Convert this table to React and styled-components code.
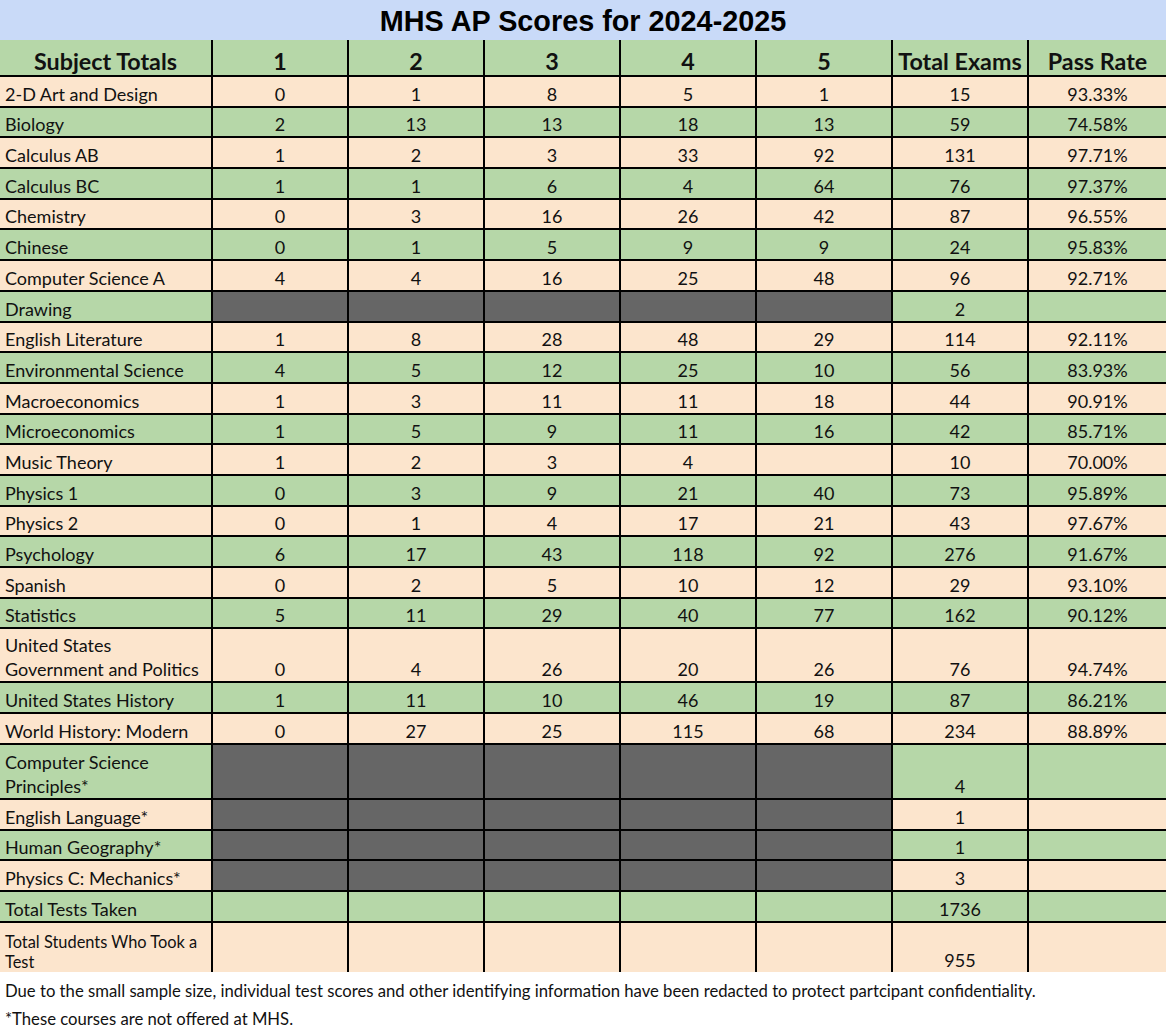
import React from 'react';
import styled, { createGlobalStyle } from 'styled-components';

const GlobalStyle = createGlobalStyle`
  html, body {
    margin: 0;
    padding: 0;
    background: #ffffff;
  }
  body {
    font-family: Lato, 'Noto Sans', sans-serif;
    color: #111111;
  }
`;

const GREEN = '#b6d7a8';
const PEACH = '#fce5cd';
const GRAY = '#666666';

const Sheet = styled.div`
  width: 1166px;
`;

const TitleBar = styled.div`
  height: 40px;
  background: #c9daf8;
  display: flex;
  align-items: center;
  justify-content: center;
  padding-top: 2px;
  box-sizing: border-box;
  font-family: 'Liberation Sans', Arial, sans-serif;
  font-weight: 700;
  font-size: 28.8px;
  color: #000;
`;

const Row = styled.div`
  display: grid;
  grid-template-columns: 213px repeat(6, 136px) 1fr;
  height: ${(p) => p.h}px;
  box-sizing: border-box;
  background: ${(p) => (p.green ? GREEN : PEACH)};
  border-bottom: ${(p) => (p.last ? 'none' : '2px solid #000')};
  font-size: 18px;
  line-height: 24px;
`;

const HeaderRow = styled(Row)`
  font-size: 23.3px;
  line-height: 28px;
  font-weight: 700;
`;

const Cell = styled.div`
  display: flex;
  align-items: flex-end;
  justify-content: ${(p) => (p.left ? 'flex-start' : 'center')};
  padding: ${(p) => (p.left ? '0 0 0 5px' : '0')};
  border-right: ${(p) => (p.end ? 'none' : '2px solid #000')};
  background: ${(p) => (p.redacted ? GRAY : 'transparent')};
  white-space: nowrap;
  overflow: hidden;
`;

const SmallLabel = styled.span`
  font-size: 16.4px;
  line-height: 20px;
`;

const Notes = styled.div`
  padding: 5px 0 0 5px;
  font-size: 16.7px;
  line-height: 28px;
  color: #111;
`;

const headers = ['Subject Totals', '1', '2', '3', '4', '5', 'Total Exams', 'Pass Rate'];

const R = 'R';
const rows = [
  ['2-D Art and Design', 0, 1, 8, 5, 1, 15, '93.33%'],
  ['Biology', 2, 13, 13, 18, 13, 59, '74.58%'],
  ['Calculus AB', 1, 2, 3, 33, 92, 131, '97.71%'],
  ['Calculus BC', 1, 1, 6, 4, 64, 76, '97.37%'],
  ['Chemistry', 0, 3, 16, 26, 42, 87, '96.55%'],
  ['Chinese', 0, 1, 5, 9, 9, 24, '95.83%'],
  ['Computer Science A', 4, 4, 16, 25, 48, 96, '92.71%'],
  ['Drawing', R, R, R, R, R, 2, ''],
  ['English Literature', 1, 8, 28, 48, 29, 114, '92.11%'],
  ['Environmental Science', 4, 5, 12, 25, 10, 56, '83.93%'],
  ['Macroeconomics', 1, 3, 11, 11, 18, 44, '90.91%'],
  ['Microeconomics', 1, 5, 9, 11, 16, 42, '85.71%'],
  ['Music Theory', 1, 2, 3, 4, '', 10, '70.00%'],
  ['Physics 1', 0, 3, 9, 21, 40, 73, '95.89%'],
  ['Physics 2', 0, 1, 4, 17, 21, 43, '97.67%'],
  ['Psychology', 6, 17, 43, 118, 92, 276, '91.67%'],
  ['Spanish', 0, 2, 5, 10, 12, 29, '93.10%'],
  ['Statistics', 5, 11, 29, 40, 77, 162, '90.12%'],
  [['United States', 'Government and Politics'], 0, 4, 26, 20, 26, 76, '94.74%'],
  ['United States History', 1, 11, 10, 46, 19, 87, '86.21%'],
  ['World History: Modern', 0, 27, 25, 115, 68, 234, '88.89%'],
  [['Computer Science', 'Principles*'], R, R, R, R, R, 4, ''],
  ['English Language*', R, R, R, R, R, 1, ''],
  ['Human Geography*', R, R, R, R, R, 1, ''],
  ['Physics C: Mechanics*', R, R, R, R, R, 3, ''],
  ['Total Tests Taken', '', '', '', '', '', 1736, ''],
  [['Total Students Who Took a', 'Test'], '', '', '', '', '', 955, ''],
];

// row heights measured line to line
const heights = [
  30.7, 30.7, 30.7, 30.7, 30.7, 30.7, 30.7, 30.7, 30.7, 30.7, 30.7, 30.7, 30.7, 30.7, 30.7, 30.7,
  30.7, 30.8, 54, 31, 31, 55, 31, 30, 31, 31, 49,
];

const Label = ({ text, small }) => {
  const content = Array.isArray(text) ? (
    <>
      {text[0]}
      <br />
      {text[1]}
    </>
  ) : (
    text
  );
  return small ? <SmallLabel>{content}</SmallLabel> : <span>{content}</span>;
};

export default function App() {
  return (
    <Sheet>
      <GlobalStyle />
      <TitleBar>MHS AP Scores for 2024-2025</TitleBar>
      <HeaderRow h={37} green>
        {headers.map((h, i) => (
          <Cell key={h} end={i === headers.length - 1}>
            {h}
          </Cell>
        ))}
      </HeaderRow>
      {rows.map((r, ri) => {
        const last = ri === rows.length - 1;
        return (
          <Row key={ri} h={heights[ri]} green={ri % 2 === 1} last={last}>
            <Cell left>
              <Label text={r[0]} small={last} />
            </Cell>
            {r.slice(1).map((v, ci) => (
              <Cell key={ci} redacted={v === R} end={ci === 6}>
                {v === R ? '' : v}
              </Cell>
            ))}
          </Row>
        );
      })}
      <Notes>
        Due to the small sample size, individual test scores and other identifying information have
        been redacted to protect partcipant confidentiality.
        <br />
        *These courses are not offered at MHS.
      </Notes>
    </Sheet>
  );
}
